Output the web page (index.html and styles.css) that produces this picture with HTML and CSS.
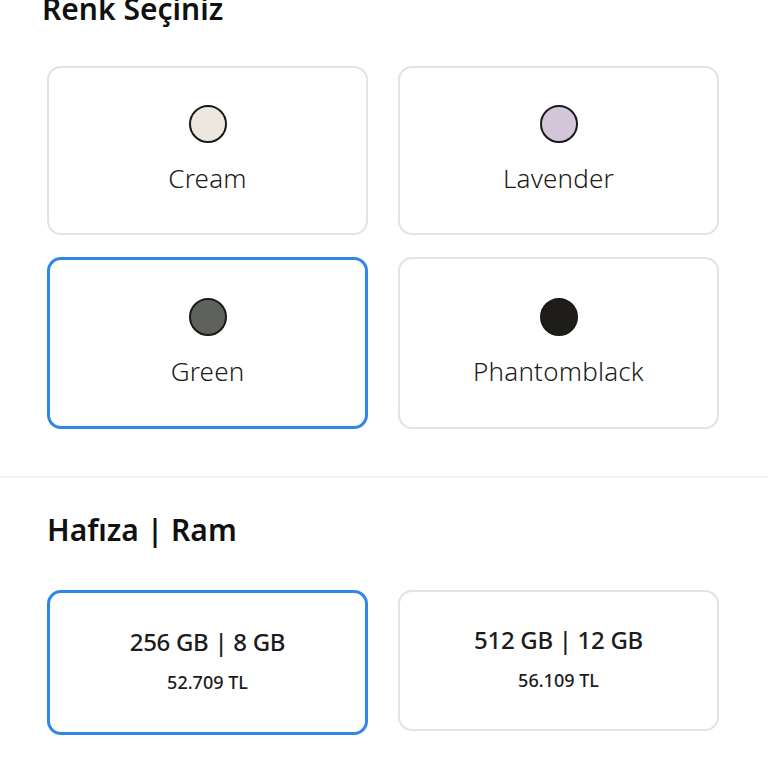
FILE: index.html
```html
<!DOCTYPE html>
<html lang="tr">
<head>
    <meta charset="UTF-8">
    <title>Renk ve Hafıza Seçimi</title>
    <link rel="stylesheet" href="styles.css">
</head>
<body>
    <div class="section colors">
        <div class="title title-top">Renk Seçiniz</div>
        <div class="options">
            <div class="option color-option">
                <span class="swatch" style="background-color: #ece8df;"></span>
                <span class="color-name">Cream</span>
            </div>
            <div class="option color-option">
                <span class="swatch" style="background-color: #d3c6da;"></span>
                <span class="color-name">Lavender</span>
            </div>
            <div class="option color-option selected">
                <span class="swatch" style="background-color: #5f625c;"></span>
                <span class="color-name">Green</span>
            </div>
            <div class="option color-option">
                <span class="swatch" style="background-color: #1f1d1a;"></span>
                <span class="color-name">Phantomblack</span>
            </div>
        </div>
    </div>
    <div class="divider"></div>
    <div class="section memory">
        <div class="title">Hafıza | Ram</div>
        <div class="options">
            <div class="option memory-option selected">
                <span class="memory-size">256 GB | 8 GB</span>
                <span class="memory-price">52.709 TL</span>
            </div>
            <div class="option memory-option">
                <span class="memory-size">512 GB | 12 GB</span>
                <span class="memory-price">56.109 TL</span>
            </div>
        </div>
    </div>
</body>
</html>
```

FILE: styles.css
```css
body {
    margin: 0;
    font-family: "Noto Sans", "Open Sans", sans-serif;
    background-color: white;
    color: #1c1c1c;
}
.section {
    padding: 0 49px 0 47px;
}
.title {
    font-size: 30px;
    font-weight: 600;
    line-height: 36px;
    color: #111;
}
.title-top {
    margin-top: -9px;
    margin-left: -5px;
}
.options {
    display: grid;
    grid-template-columns: 1fr 1fr;
    gap: 22px 30px;
}
.colors .options {
    margin-top: 39px;
    grid-template-rows: 169px 172px;
}
.option {
    box-sizing: border-box;
    border: 2px solid #e3e3e3;
    border-radius: 14px;
    display: flex;
    flex-direction: column;
    align-items: center;
    justify-content: center;
}
.option.selected {
    border: 3px solid #2f87e8;
}
.swatch {
    width: 34px;
    height: 34px;
    border: 2px solid #1a1a1a;
    border-radius: 50%;
}
.color-name {
    font-size: 26px;
    font-weight: 300;
    margin-top: 17px;
    letter-spacing: 0.2px;
}
.divider {
    height: 2px;
    background-color: #f2f2f2;
    margin-top: 47px;
}
.memory .title {
    margin-top: 34px;
}
.memory .options {
    margin-top: 42px;
    align-items: start;
}
.memory-option {
    height: 141px;
    padding-bottom: 7px;
}
.memory-option.selected {
    height: 145px;
}
.memory-size {
    font-size: 24px;
    font-weight: 500;
    letter-spacing: -0.3px;
}
.memory-price {
    font-size: 18px;
    font-weight: 500;
    margin-top: 12px;
}
```
